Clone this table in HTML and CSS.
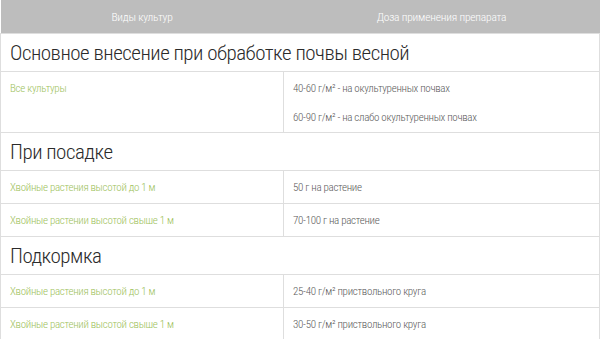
FILE: index.html
```html
<!DOCTYPE html>
<html lang="ru">
<head>
<meta charset="utf-8">
<link rel="stylesheet" href="styles.css">
</head>
<body>
<table class="dose">
  <thead>
    <tr><th class="c1">Виды культур</th><th class="c2">Доза применения препарата</th></tr>
  </thead>
  <tbody>
    <tr class="sec"><td colspan="2">Основное внесение при обработке почвы весной</td></tr>
    <tr class="row tall">
      <td class="crop">Все культуры</td>
      <td class="dosev"><p>40-60 г/м² - на окультуренных почвах</p><p>60-90 г/м² - на слабо окультуренных почвах</p></td>
    </tr>
    <tr class="sec"><td colspan="2">При посадке</td></tr>
    <tr class="row"><td class="crop">Хвойные растения высотой до 1 м</td><td class="dosev">50 г на растение</td></tr>
    <tr class="row"><td class="crop">Хвойные растении высотой свыше 1 м</td><td class="dosev">70-100 г на растение</td></tr>
    <tr class="sec"><td colspan="2">Подкормка</td></tr>
    <tr class="row"><td class="crop">Хвойные растения высотой до 1 м</td><td class="dosev">25-40 г/м² приствольного круга</td></tr>
    <tr class="row"><td class="crop">Хвойные растений высотой свыше 1 м</td><td class="dosev">30-50 г/м² приствольного круга</td></tr>
  </tbody>
</table>
</body>
</html>
```
FILE: styles.css
```css
html, body {
  margin: 0;
  padding: 0;
  background: #fff;
}
body {
  font-family: Roboto, "Liberation Sans", sans-serif;
}
.dose {
  width: 600px;
  border-collapse: collapse;
  table-layout: fixed;
}
.dose th {
  background: #bdbdbd;
  color: #fff;
  font-family: "Roboto Condensed", "Liberation Sans Narrow", Roboto, sans-serif;
  font-stretch: 75%;
  font-weight: 300;
  font-size: 11.5px;
  letter-spacing: -0.2px;
  height: 33px;
  padding: 0;
  text-align: center;
  vertical-align: middle;
}
.dose th.c1 { width: 283px; }
.dose td {
  border: 1px solid #dedede;
  padding: 0 9px;
}
.sec td {
  height: 37px;
  font-family: "Roboto Condensed", "Liberation Sans Narrow", Roboto, sans-serif;
  font-stretch: 75%;
  font-size: 21px;
  letter-spacing: -0.5px;
  font-weight: 300;
  color: #2b2b2b;
  vertical-align: middle;
  padding-left: 9px;
}
.row td {
  height: 32px;
  vertical-align: middle;
  font-family: "Roboto Condensed", "Liberation Sans Narrow", Roboto, sans-serif;
  font-stretch: 75%;
  font-size: 11px;
  letter-spacing: -0.3px;
}
.row.tall td {
  height: 51px;
  vertical-align: top;
  padding-top: 9px;
}
.crop {
  color: #9dc15b;
  font-weight: 300;
}
.dosev {
  color: #5a5a5a;
  font-weight: 300;
}
.dosev p {
  margin: 0 0 13px;
  line-height: 16px;
}
.dosev p:last-child { margin-bottom: 0; }
.row.tall .crop { line-height: 16px; }
```
